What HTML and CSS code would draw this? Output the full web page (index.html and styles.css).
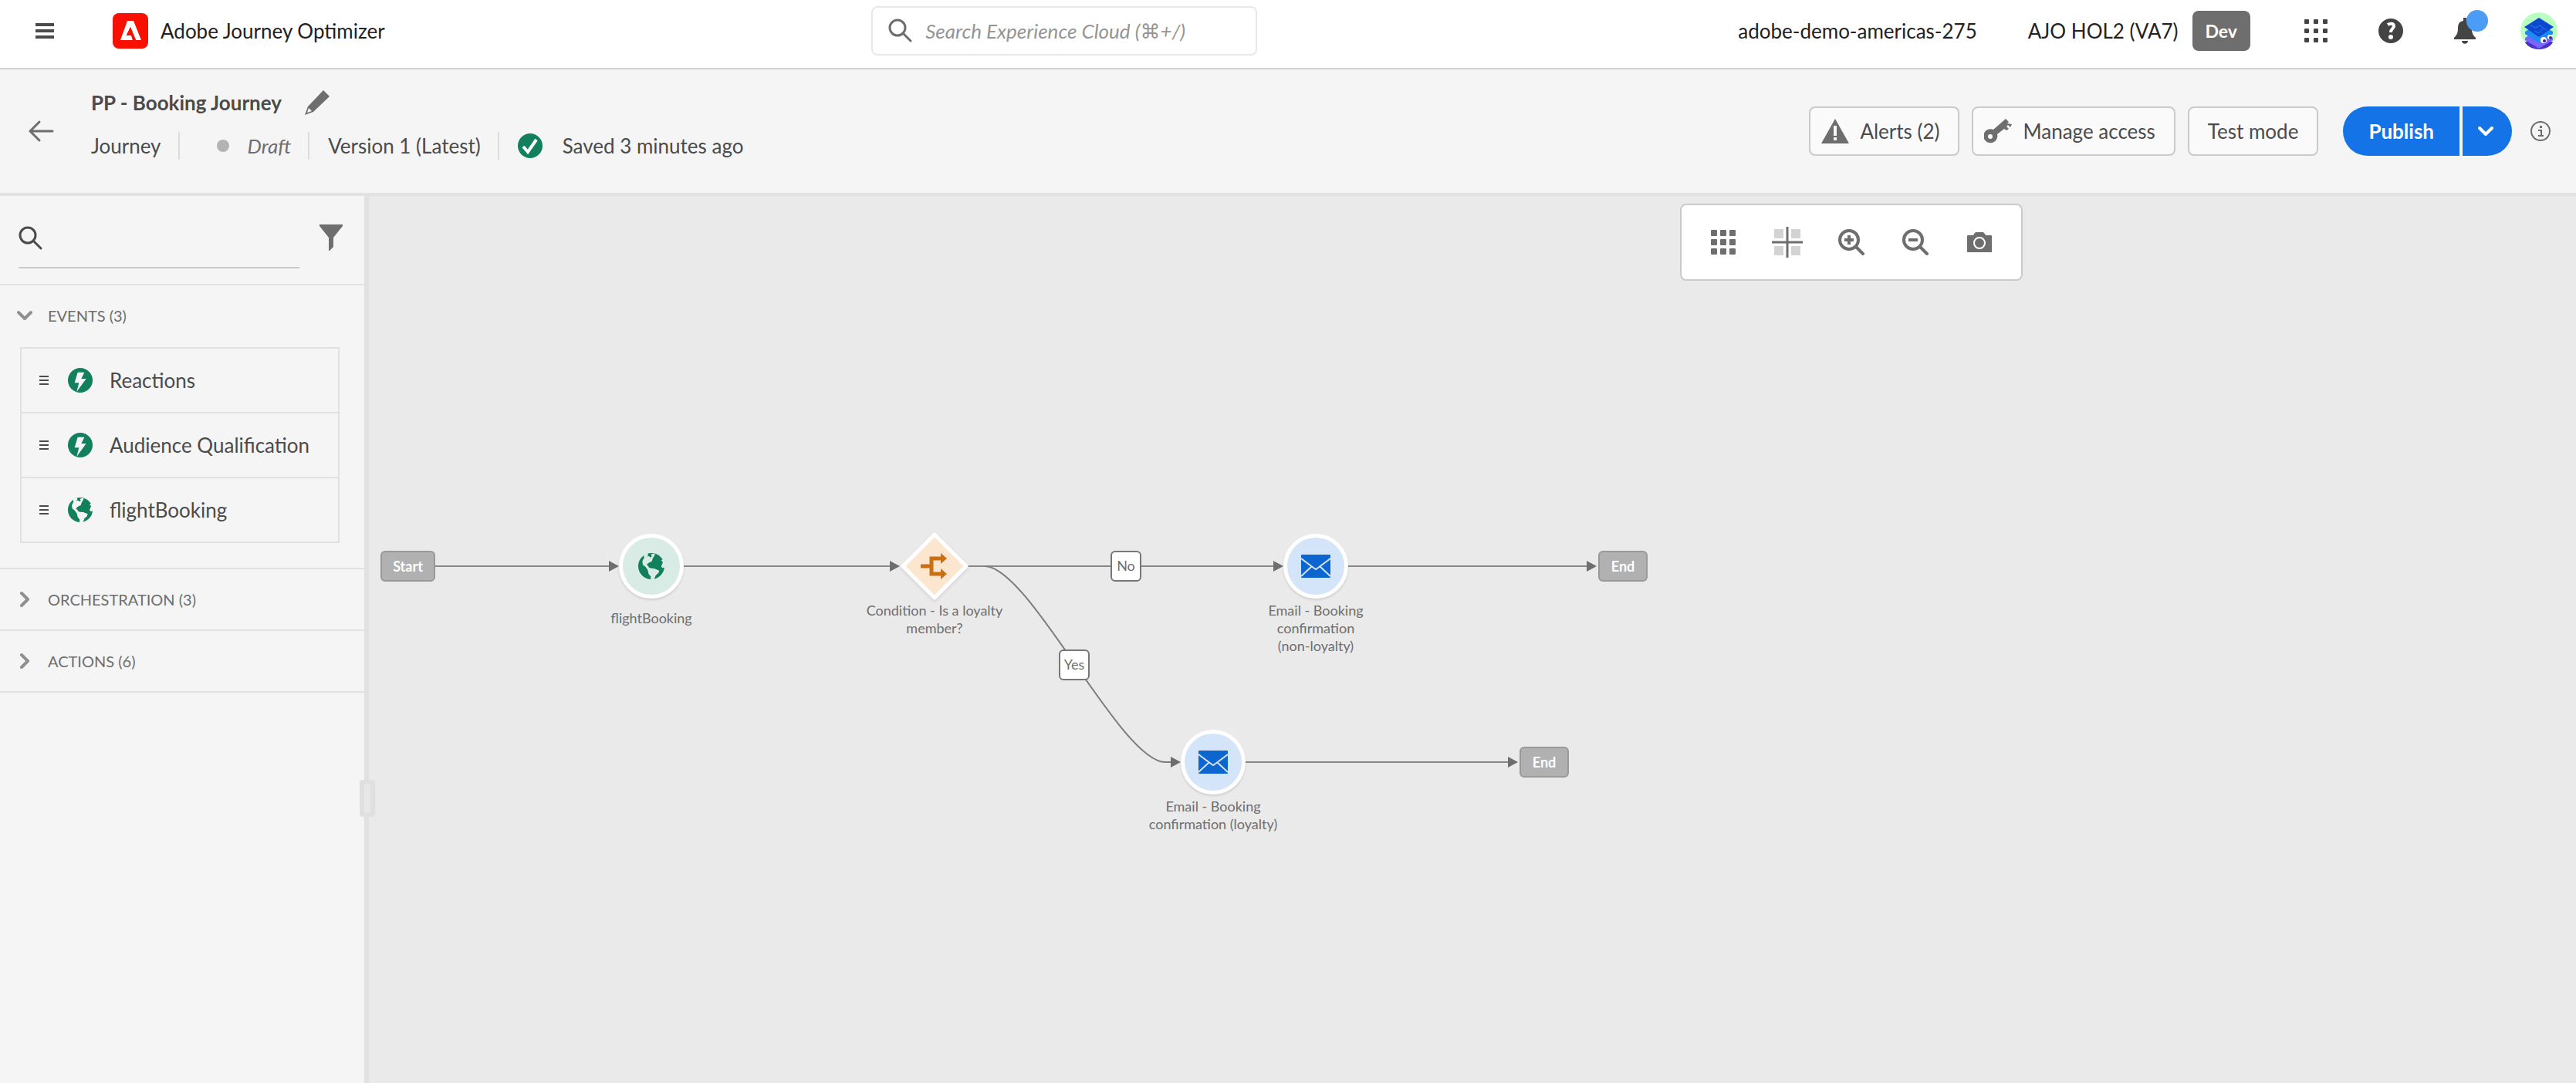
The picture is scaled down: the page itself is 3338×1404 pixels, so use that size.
FILE: index.html
```html
<!DOCTYPE html>
<html lang="en">
<head>
<meta charset="utf-8">
<title>PP - Booking Journey</title>
<link rel="stylesheet" href="styles.css">
</head>
<body>
<svg class="defs" aria-hidden="true">
  <symbol id="i-globe" viewBox="0 0 96 96">
    <circle cx="48" cy="48" r="48" fill="currentColor"/>
    <path class="cut" d="M20 8 L34 0 L37 7 L32 12 L40 11 L44 16 L50 12 L47 5 L55 2 L62 4 L58 12 L53 20 L50 30 L43 33 L35 38 L31 44 L37 47 L39 53 L48 56 L60 57 L77 64 L74 73 L64 82 L60 92 L55 100 L45 100 L46 86 L38 76 L35 62 L27 51 L17 43 L15 30 L22 16Z"/>
    <path class="cut" d="M94 20 L84 27 L90 33 L88 40 L84 48 L88 54 L100 52 L100 24Z"/>
  </symbol>
  <symbol id="i-bolt" viewBox="0 0 96 96">
    <circle cx="48" cy="48" r="48" fill="currentColor"/>
    <path class="cut" d="M38 17H64L52 42H71L34 93L43 58H26Z"/>
  </symbol>
  <symbol id="i-mail" viewBox="0 0 38 30">
    <rect width="38" height="30" rx="1" fill="currentColor"/>
    <path class="cut-line" d="M0 5L16 17L19 19L22 17L38 5M0 28L14 15M38 28L24 15"/>
  </symbol>
  <symbol id="i-search" viewBox="0 0 32 32">
    <circle cx="12" cy="12" r="10" fill="none" stroke="currentColor" stroke-width="3"/>
    <path d="M19 19L29 29" stroke="currentColor" stroke-width="3" stroke-linecap="round"/>
  </symbol>
  <symbol id="i-grip" viewBox="0 0 12 12">
    <path d="M0 1H12M0 6H12M0 11H12" stroke="currentColor" stroke-width="2"/>
  </symbol>
  <symbol id="i-chevron" viewBox="0 0 20 20">
    <path d="M6 2L14 10L6 18" fill="none" stroke="currentColor" stroke-width="4" stroke-linecap="round" stroke-linejoin="round"/>
  </symbol>
</svg>

<header class="topbar">
  <div class="brand">
    <button class="icon-btn" aria-label="Menu">
      <svg width="24" height="20" viewBox="0 0 24 20"><path d="M0 2H24M0 10H24M0 18H24" stroke="#4b4b4b" stroke-width="4"/></svg>
    </button>
    <a class="brand-link" href="#">
      <svg width="46" height="46" viewBox="0 0 46 46"><rect width="46" height="46" rx="8" fill="#fa0f00"/><path fill="#fff" d="M19 10H27L37 35H30L28 30 23 18 18 28H24L26 35H10Z"/><path fill="#fa0f00" d="M23 18L30 35H26L24 29H18Z"/></svg>
      <span>Adobe Journey Optimizer</span>
    </a>
  </div>
  <label class="global-search">
    <svg class="ic-32"><use href="#i-search"/></svg>
    <input type="search" aria-label="Search Experience Cloud" placeholder="Search Experience Cloud (⌘+/)">
  </label>
  <div class="account">
    <span class="org">adobe-demo-americas-275</span>
    <span class="sandbox">AJO HOL2 (VA7) <span class="tag">Dev</span></span>
    <nav class="shell-icons">
      <button class="icon-btn" aria-label="Apps">
        <svg width="30" height="30" viewBox="0 0 30 30" fill="#444"><rect width="6" height="6" rx="1"/><rect x="12" width="6" height="6" rx="1"/><rect x="24" width="6" height="6" rx="1"/><rect y="12" width="6" height="6" rx="1"/><rect x="12" y="12" width="6" height="6" rx="1"/><rect x="24" y="12" width="6" height="6" rx="1"/><rect y="24" width="6" height="6" rx="1"/><rect x="12" y="24" width="6" height="6" rx="1"/><rect x="24" y="24" width="6" height="6" rx="1"/></svg>
      </button>
      <button class="icon-btn" aria-label="Help">
        <svg width="32" height="32" viewBox="0 0 32 32"><circle cx="16" cy="16" r="16" fill="#444"/><path d="M12 8C15 6 20 6 20 10C20 13 16 13 16 18" fill="none" stroke="#fff" stroke-width="4"/><circle cx="16" cy="24" r="3" fill="#fff"/></svg>
      </button>
      <button class="icon-btn bell" aria-label="Notifications">
        <svg width="28" height="34" viewBox="0 0 28 34" fill="#444"><path d="M12 0H16V4C22 5 23 9 23 14C23 20 25 23 28 26V28H0V26C3 23 5 20 5 14C5 9 6 5 12 4ZM10 30H18C18 35 10 35 10 30Z"/></svg>
        <span class="dot"></span>
      </button>
      <button class="icon-btn" aria-label="Profile">
        <svg width="48" height="48" viewBox="0 0 48 48"><defs><clipPath id="av"><circle cx="24" cy="24" r="24"/></clipPath></defs><g clip-path="url(#av)"><circle cx="24" cy="24" r="24" fill="#b9fdc0"/><path fill="#4b2fc9" d="M6 39L24 27L42 39L34 50H14Z"/><path fill="#7a63ff" d="M6 33L24 22L42 33V36L24 47L6 36Z"/><path fill="#1f8af5" d="M6 25L24 14L42 25V28L24 40L6 28Z"/><path fill="#0a49d0" d="M24 7L43 19L24 32L5 19Z"/><path d="M12 16L20 20L25 17L34 23M18 24L24 27L30 20" stroke="#2f78ee" fill="none"/><circle cx="30" cy="36" r="4" fill="#fff"/><circle cx="38" cy="32" r="3" fill="#fff"/><circle cx="31" cy="37" r="2" fill="#35209a"/><circle cx="39" cy="33" r="2" fill="#35209a"/></g></svg>
      </button>
    </nav>
  </div>
</header>

<section class="journey-bar">
  <button class="icon-btn back" aria-label="Back">
    <svg width="34" height="30" viewBox="0 0 34 30"><path d="M32 15H3M15 3L3 15L15 27" fill="none" stroke="#6e6e6e" stroke-width="3" stroke-linecap="round" stroke-linejoin="round"/></svg>
  </button>
  <div class="journey-info">
    <div class="title-row">
      <h1>PP - Booking Journey</h1>
      <button class="icon-btn" aria-label="Edit name">
        <svg width="32" height="32" viewBox="0 0 32 32"><path d="M24 0L32 8L11 28L0 32L4 21Z" fill="#6e6e6e"/><path d="M5 23L9 27L3 29Z" fill="#f5f5f5"/></svg>
      </button>
    </div>
    <ul class="meta">
      <li>Journey</li>
      <li class="draft"><span class="status-dot"></span>Draft</li>
      <li>Version 1 (Latest)</li>
      <li class="saved"><svg width="32" height="32" viewBox="0 0 32 32"><circle cx="16" cy="16" r="16" fill="#12805c"/><path d="M7 17L13 24L24 8" fill="none" stroke="#fff" stroke-width="4"/></svg>Saved 3 minutes ago</li>
    </ul>
  </div>
  <div class="actions">
    <button class="btn"><svg width="36" height="32" viewBox="0 0 36 32"><path d="M18 0L36 32H0Z" fill="#6e6e6e"/><path d="M16 9H20V22H16ZM16 24H20V28H16Z" fill="#fafafa"/></svg>Alerts (2)</button>
    <button class="btn"><svg width="36" height="32" viewBox="0 0 36 32"><path fill="#6e6e6e" fill-rule="evenodd" d="M28 0L32 4L30 6L36 7L34 11L31 8L29 10L32 13L29 15L26 13L17 20A9 9 0 1 1 12 14ZM8 20A3 3 0 1 0 8 26A3 3 0 1 0 8 20Z"/></svg>Manage access</button>
    <button class="btn plain">Test mode</button>
    <div class="publish">
      <button class="cta">Publish</button>
      <button class="cta more" aria-label="More publish options"><svg class="ic-20 down"><use href="#i-chevron"/></svg></button>
    </div>
    <button class="icon-btn" aria-label="Journey information">
      <svg width="26" height="26" viewBox="0 0 26 26"><circle cx="13" cy="13" r="12" fill="none" stroke="#6e6e6e" stroke-width="2"/><path d="M10 12H14V19M10 19H17" fill="none" stroke="#6e6e6e" stroke-width="2"/><path d="M12 6H15V9H12Z" fill="#6e6e6e"/></svg>
    </button>
  </div>
</section>

<main class="workspace">
  <aside class="palette">
    <div class="palette-search">
      <label class="quiet-field">
        <svg class="ic-32"><use href="#i-search"/></svg>
        <input type="search" aria-label="Search activities">
      </label>
      <button class="icon-btn" aria-label="Filter">
        <svg width="30" height="34" viewBox="0 0 30 34"><path d="M0 0H30V2L18 17V29L13 34H12V17L0 2Z" fill="#6e6e6e"/></svg>
      </button>
    </div>
    <section class="group">
      <button class="group-head" aria-expanded="true"><svg class="ic-20 down"><use href="#i-chevron"/></svg>EVENTS (3)</button>
      <ul class="items">
        <li><svg class="grip"><use href="#i-grip"/></svg><svg class="ic-32 green"><use href="#i-bolt"/></svg>Reactions</li>
        <li><svg class="grip"><use href="#i-grip"/></svg><svg class="ic-32 green"><use href="#i-bolt"/></svg>Audience Qualification</li>
        <li><svg class="grip"><use href="#i-grip"/></svg><svg class="ic-32 green"><use href="#i-globe"/></svg>flightBooking</li>
      </ul>
    </section>
    <section class="group">
      <button class="group-head" aria-expanded="false"><svg class="ic-20"><use href="#i-chevron"/></svg>ORCHESTRATION (3)</button>
    </section>
    <section class="group">
      <button class="group-head" aria-expanded="false"><svg class="ic-20"><use href="#i-chevron"/></svg>ACTIONS (6)</button>
    </section>
  </aside>
  <div class="splitter"><span class="handle"></span></div>

  <div class="canvas">
    <svg class="edges" aria-hidden="true">
      <path class="straight" d="M86 480H312M408 480H676M776 480H1174M1268 480H1580M1136 734H1478"/>
      <path class="curve" d="M798 480C856 480 974 734 1032 734H1042"/>
      <path class="heads" d="M311 473L324 480L311 487ZM675 473L688 480L675 487ZM1172 473L1185 480L1172 487ZM1578 473L1591 480L1578 487ZM1039 727L1052 734L1039 741ZM1476 727L1489 734L1476 741Z"/>
    </svg>

    <div class="terminal n-start">Start</div>
    <div class="terminal n-end1">End</div>
    <div class="terminal n-end2">End</div>
    <div class="branch n-no">No</div>
    <div class="branch n-yes">Yes</div>

    <div class="node event n-flight">
      <span class="disc"><svg width="34" height="34"><use href="#i-globe"/></svg></span>
      <span class="caption low">flightBooking</span>
    </div>
    <div class="node n-cond">
      <svg class="diamond" width="92" height="92" viewBox="0 0 92 92"><path d="M46 5L87 46L46 87L5 46Z" fill="#fce6d0" stroke="#fff" stroke-width="5" stroke-linejoin="round"/><path d="M28 46H42M56 36H42V56H56" fill="none" stroke="#cb6f10" stroke-width="5"/><path d="M54 29L62 36L54 43ZM54 49L62 56L54 63Z" fill="#cb6f10"/></svg>
      <span class="caption">Condition - Is a loyalty<br>member?</span>
    </div>
    <div class="node mail n-mail1">
      <span class="disc"><svg width="38" height="30"><use href="#i-mail"/></svg></span>
      <span class="caption">Email - Booking<br>confirmation<br>(non-loyalty)</span>
    </div>
    <div class="node mail n-mail2">
      <span class="disc"><svg width="38" height="30"><use href="#i-mail"/></svg></span>
      <span class="caption">Email - Booking<br>confirmation (loyalty)</span>
    </div>

    <div class="tools" role="toolbar" aria-label="Canvas tools">
      <button aria-label="Grid"><svg width="32" height="32" viewBox="0 0 32 32" fill="#6e6e6e"><rect width="8" height="8" rx="1"/><rect x="12" width="8" height="8" rx="1"/><rect x="24" width="8" height="8" rx="1"/><rect y="12" width="8" height="8" rx="1"/><rect x="12" y="12" width="8" height="8" rx="1"/><rect x="24" y="12" width="8" height="8" rx="1"/><rect y="24" width="8" height="8" rx="1"/><rect x="12" y="24" width="8" height="8" rx="1"/><rect x="24" y="24" width="8" height="8" rx="1"/></svg></button>
      <button aria-label="Center"><svg width="40" height="40" viewBox="0 0 40 40"><path d="M3 3H15V15H3ZM25 3H37V15H25ZM3 25H15V37H3ZM25 25H37V37H25Z" fill="#d3d3d3"/><path d="M20 0V40M0 20H40" stroke="#6e6e6e" stroke-width="3"/></svg></button>
      <button aria-label="Zoom in"><svg width="34" height="34" viewBox="0 0 34 34" fill="none" stroke="#6e6e6e" stroke-width="4"><circle cx="14" cy="14" r="12"/><path d="M23 23L32 32" stroke-linecap="round"/><path d="M14 8V20M8 14H20"/></svg></button>
      <button aria-label="Zoom out"><svg width="34" height="34" viewBox="0 0 34 34" fill="none" stroke="#6e6e6e" stroke-width="4"><circle cx="14" cy="14" r="12"/><path d="M23 23L32 32" stroke-linecap="round"/><path d="M8 14H20"/></svg></button>
      <button aria-label="Snapshot"><svg width="32" height="28" viewBox="0 0 32 28"><path d="M0 6Q0 5 1 5H8Q10 1 12 1H20Q22 1 24 5H31Q32 5 32 6V27H0Z" fill="#6e6e6e"/><circle cx="16" cy="15" r="7" fill="none" stroke="#fff" stroke-width="2"/></svg></button>
    </div>
  </div>
</main>
</body>
</html>
```
FILE: styles.css
```css
* { box-sizing: border-box; }

body {
  margin: 0;
  min-height: 100vh;
  display: flex;
  flex-direction: column;
  background: #fff;
  color: #4b4b4b;
  font-family: Lato, "DejaVu Sans", sans-serif;
  font-size: 26px;
  line-height: 32px;
}

button, input { font: inherit; color: inherit; }
button { border: 0; padding: 0; background: none; cursor: pointer; }
svg { display: block; flex: none; }
ul { list-style: none; margin: 0; padding: 0; }
.defs { position: absolute; width: 0; height: 0; }
.icon-btn { display: flex; flex: none; align-items: center; }
.ic-32 { width: 32px; height: 32px; }
.ic-20 { width: 20px; height: 20px; }
.down { transform: rotate(90deg); }
.green { color: #12805c; }
.cut { fill: var(--cut, #f5f5f5); }
.cut-line { fill: none; stroke: #d4e5f9; stroke-width: 2; }

/* Shell bar */
.topbar {
  display: grid;
  grid-template-columns: 9fr 500px 14fr;
  align-items: center;
  height: 90px;
  padding: 0 24px 8px 46px;
  border-bottom: 2px solid #d0d0d0;
  color: #222;
}
.brand { display: flex; align-items: center; gap: 76px; }
.brand-link { display: flex; align-items: center; gap: 16px; color: inherit; text-decoration: none; }
.global-search {
  display: flex;
  align-items: center;
  gap: 16px;
  height: 64px;
  padding: 0 20px;
  border: 2px solid #e8e8e8;
  border-radius: 8px;
  color: #6e6e6e;
}
.global-search input {
  flex: 1;
  min-width: 0;
  padding: 0;
  border: 0;
  outline: 0;
  background: none;
  font-style: italic;
}
.global-search input::placeholder { color: #959595; }
.account { display: flex; align-items: center; justify-content: flex-end; }
.org { margin-right: 66px; }
.sandbox { display: flex; align-items: center; gap: 18px; margin-right: 70px; }
.tag {
  height: 52px;
  padding: 0 17px;
  border-radius: 8px;
  background: #6e6e6e;
  color: #fff;
  font-size: 23px;
  font-weight: 700;
  line-height: 52px;
}
.shell-icons { display: flex; align-items: center; gap: 66px; }
.bell { position: relative; }
.bell + .icon-btn { margin-left: -8px; }
.dot {
  position: absolute;
  top: -10px;
  right: -16px;
  width: 28px;
  height: 28px;
  border-radius: 50%;
  background: #4b9cf5;
}

/* Journey header */
.journey-bar {
  display: flex;
  align-items: center;
  height: 164px;
  padding: 0 33px 0 36px;
  border-bottom: 4px solid #e2e2e2;
  background: #f5f5f5;
}
.back { margin-right: 48px; }
.journey-info { display: flex; flex-direction: column; gap: 22px; padding-bottom: 17px; }
.title-row { display: flex; align-items: center; gap: 30px; }
h1 { margin: 0; font-size: 26px; line-height: 32px; font-weight: 700; }
.meta { display: flex; align-items: center; height: 36px; }
.meta li { display: flex; align-items: center; height: 36px; padding: 0 22px 0 24px; border-left: 2px solid #dcdcdc; }
.meta li:first-child { padding-left: 0; border-left: 0; }
.meta .draft { gap: 24px; padding-left: 48px; color: #6e6e6e; font-style: italic; }
.meta .saved { gap: 26px; }
.status-dot { width: 16px; height: 16px; border-radius: 50%; background: #b3b3b3; }
.actions { display: flex; align-items: center; gap: 16px; margin-left: auto; }
.btn {
  display: flex;
  align-items: center;
  gap: 14px;
  height: 64px;
  padding: 0 24px 0 14px;
  border: 2px solid #cacaca;
  border-radius: 8px;
  background: #fafafa;
}
.btn.plain { padding: 0 24px; }
.publish { display: flex; gap: 4px; margin: 0 8px 0 16px; }
.cta {
  height: 64px;
  padding: 0 33px;
  border-radius: 32px 0 0 32px;
  background: #1473e6;
  color: #fff;
  font-weight: 700;
}
.cta.more { display: flex; align-items: center; padding: 0 24px 0 20px; border-radius: 0 32px 32px 0; }

/* Activity palette */
.workspace { display: flex; flex: 1; }
.palette { flex: 0 0 472px; background: #f5f5f5; }
.palette-search {
  display: flex;
  align-items: center;
  justify-content: space-between;
  padding: 14px 28px 20px 24px;
  border-bottom: 2px solid #e1e1e1;
}
.quiet-field { display: flex; align-items: center; width: 364px; height: 80px; padding-top: 4px; border-bottom: 2px solid #cacaca; }
.quiet-field input { flex: 1; min-width: 0; border: 0; outline: 0; background: none; }
.group { border-bottom: 2px solid #e1e1e1; }
.group-head {
  display: flex;
  align-items: center;
  gap: 20px;
  width: 100%;
  height: 78px;
  padding: 0 22px;
  color: #6e6e6e;
  font-size: 20px;
}
.group-head svg { color: #909090; }
.items { margin: 2px 32px 32px 26px; border: 2px solid #e1e1e1; }
.items li { display: flex; align-items: center; height: 84px; padding-left: 23px; border-bottom: 2px solid #e1e1e1; }
.items li:last-child { height: 82px; border-bottom: 0; }
.grip { width: 12px; height: 12px; margin-right: 25px; }
.items .green { margin-right: 22px; }

.splitter { position: relative; flex: 0 0 6px; background: #e1e1e1; }
.handle {
  position: absolute;
  z-index: 1;
  top: 757px;
  left: -6px;
  width: 20px;
  height: 48px;
  border: 6px solid #e0e0e0;
  border-radius: 4px;
  background: #e8e8e8;
}

/* Journey canvas: nodes are placed by their canvas coordinates */
.canvas {
  position: relative;
  flex: 1;
  min-height: 800px;
  overflow: hidden;
  background: #eaeaea;
  color: #6e6e6e;
  font-size: 18px;
  line-height: 23px;
}
.edges { position: absolute; inset: 0; width: 100%; height: 100%; }
.straight { fill: none; stroke: #888; stroke-width: 2; }
.curve { fill: none; stroke: #7c7c7c; stroke-width: 2; }
.heads { fill: #6e6e6e; }

.terminal, .branch { position: absolute; height: 40px; border-radius: 6px; text-align: center; }
.terminal {
  width: 64px;
  border: 2px solid #999;
  background: #b1b1b1;
  color: #fff;
  font-weight: 700;
  line-height: 36px;
}
.branch { width: 40px; border: 2px solid #777; background: #fff; line-height: 34px; }
.n-start { left: 15px; top: 460px; width: 71px; }
.n-end1 { left: 1593px; top: 460px; }
.n-end2 { left: 1491px; top: 714px; }
.n-no { left: 961px; top: 460px; }
.n-yes { left: 894px; top: 588px; }

.node { position: absolute; display: flex; flex-direction: column; align-items: center; width: 240px; }
.disc {
  display: flex;
  align-items: center;
  justify-content: center;
  width: 84px;
  height: 84px;
  border: 5px solid #fff;
  border-radius: 50%;
  box-shadow: 0 2px 3px rgba(0, 0, 0, 0.12);
}
.caption { margin-top: 4px; text-align: center; }
.caption.low { margin-top: 14px; }
.diamond { margin: -4px; filter: drop-shadow(0 2px 2px rgba(0, 0, 0, 0.1)); }
.event .disc { --cut: #d8ebe5; background: #d8ebe5; color: #12805c; }
.mail .disc { background: #d4e5f9; color: #0d66d0; }
.n-flight { left: 246px; top: 438px; }
.n-cond { left: 613px; top: 438px; }
.n-mail1 { left: 1107px; top: 438px; }
.n-mail2 { left: 974px; top: 692px; }

.tools {
  position: absolute;
  top: 10px;
  right: 717px;
  display: flex;
  width: 444px;
  height: 100px;
  padding: 0 12px;
  border: 2px solid #cacaca;
  border-radius: 8px;
  background: #fff;
}
.tools button { display: flex; flex: 1; align-items: center; justify-content: center; }
```
